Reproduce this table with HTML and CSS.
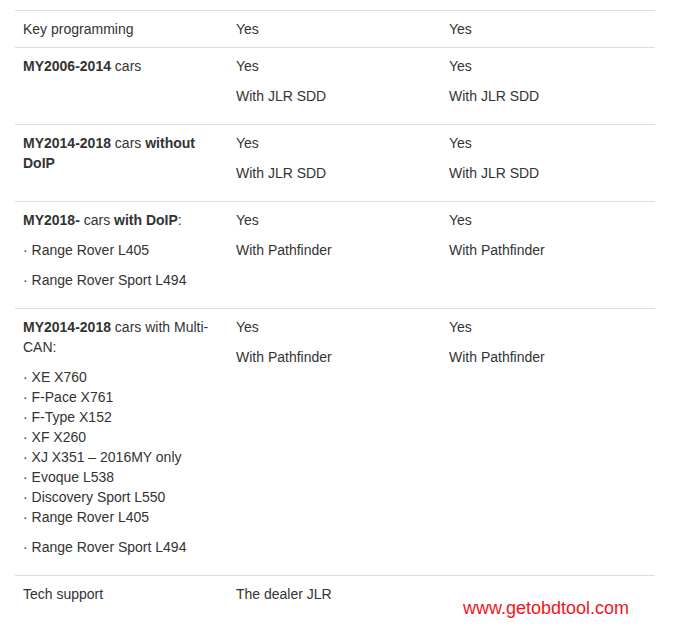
FILE: index.html
```html
<!DOCTYPE html>
<html>
<head>
<meta charset="utf-8">
<link rel="stylesheet" href="styles.css">
</head>
<body>
<div class="wrap">
<table class="spec">
<colgroup><col class="c1"><col class="c2"><col class="c3"></colgroup>
<tr>
<td>Key programming</td>
<td>Yes</td>
<td>Yes</td>
</tr>
<tr>
<td><p><b>MY2006-2014</b> cars</p></td>
<td><p>Yes</p><p>With JLR SDD</p></td>
<td><p>Yes</p><p>With JLR SDD</p></td>
</tr>
<tr>
<td><p><b>MY2014-2018</b> cars <b>without DoIP</b></p></td>
<td><p>Yes</p><p>With JLR SDD</p></td>
<td><p>Yes</p><p>With JLR SDD</p></td>
</tr>
<tr>
<td><p><b>MY2018-</b> cars <b>with DoIP</b>:</p><p>· Range Rover L405</p><p>· Range Rover Sport L494</p></td>
<td><p>Yes</p><p>With Pathfinder</p></td>
<td><p>Yes</p><p>With Pathfinder</p></td>
</tr>
<tr>
<td><p><b>MY2014-2018</b> cars with Multi-CAN:</p><p>· XE X760<br>· F-Pace X761<br>· F-Type X152<br>· XF X260<br>· XJ X351 – 2016MY only<br>· Evoque L538<br>· Discovery Sport L550<br>· Range Rover L405</p><p>· Range Rover Sport L494</p></td>
<td><p>Yes</p><p>With Pathfinder</p></td>
<td><p>Yes</p><p>With Pathfinder</p></td>
</tr>
<tr>
<td>Tech support</td>
<td>The dealer JLR</td>
<td></td>
</tr>
</table>
<div class="mark">www.getobdtool.com</div>
</div>
</body>
</html>
```
FILE: styles.css
```css
html, body {
  margin: 0;
  padding: 0;
  background: #fff;
}
body {
  font-family: "Liberation Sans", Arial, sans-serif;
  font-size: 14px;
  line-height: 20px;
  color: #333;
}
.wrap {
  position: relative;
  padding: 10px 15px 0;
  height: 631px;
}
.spec {
  width: 640px;
  border-collapse: collapse;
  table-layout: fixed;
}
.c1, .c2 {
  width: 213px;
}
.c3 {
  width: 214px;
}
.spec td {
  vertical-align: top;
  padding: 8px 8px;
  border-top: 1px solid #ddd;
}
.spec tr:last-child td {
  padding-bottom: 40px;
}
.spec p {
  margin: 0 0 10px;
}
.spec b {
  font-weight: bold;
}
.mark {
  position: absolute;
  left: 463px;
  top: 597px;
  font-size: 18px;
  line-height: 22px;
  color: #f0141e;
}
```
